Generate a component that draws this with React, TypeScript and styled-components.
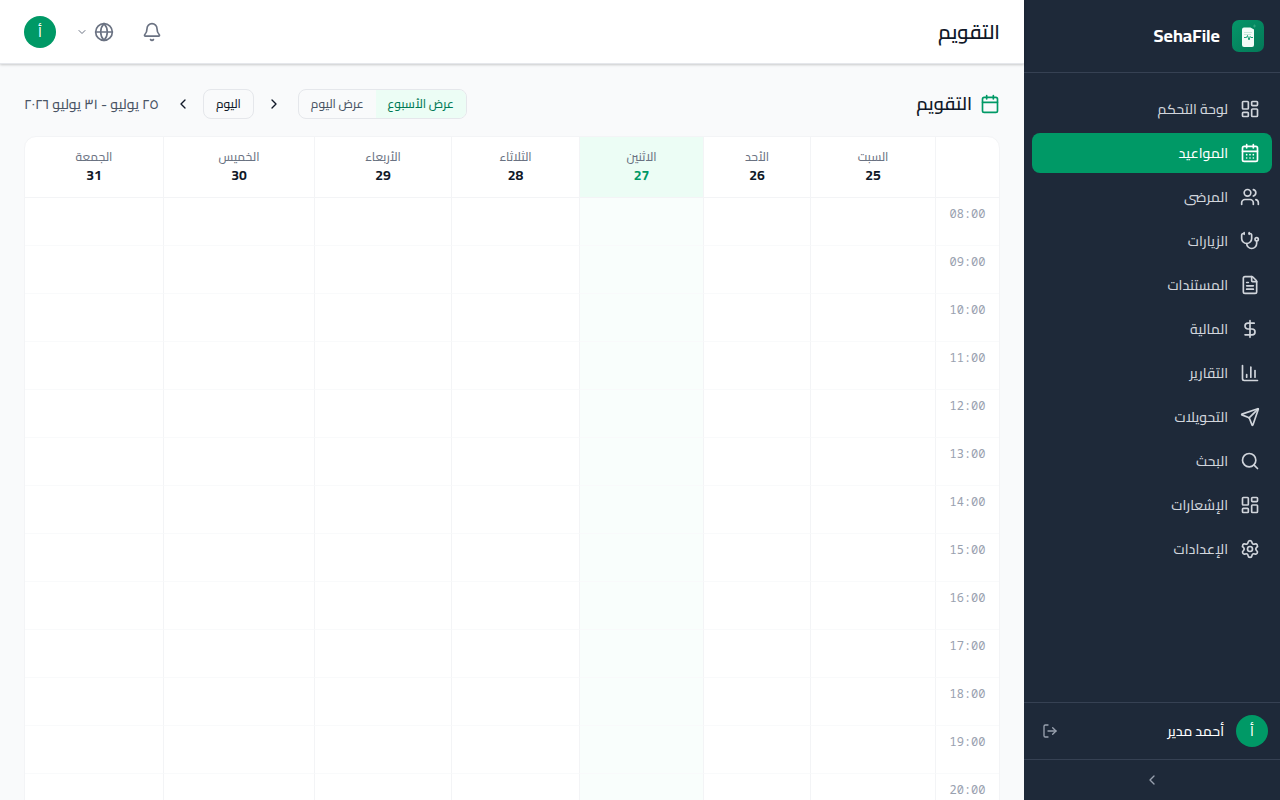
import React from "react";
import styled, { createGlobalStyle, css } from "styled-components";
import {
  Bell,
  Calendar,
  CalendarDays,
  ChartColumn,
  ChevronDown,
  ChevronLeft,
  ChevronRight,
  DollarSign,
  FileText,
  Globe,
  LayoutDashboard,
  LogOut,
  LucideIcon,
  Search,
  Send,
  Settings,
  Stethoscope,
  Users,
} from "lucide-react";

const GlobalStyle = createGlobalStyle`
  *, *::before, *::after { box-sizing: border-box; }
  body {
    margin: 0;
    font-family: Cairo, "Noto Sans", "DejaVu Sans", sans-serif;
    font-size: 14px;
    line-height: 20px;
    color: #101828;
    background: #f9fafb;
  }
  h1, h2, p { margin: 0; }
  button {
    font: inherit;
    color: inherit;
    background: none;
    border: 0;
    padding: 0;
    cursor: pointer;
  }
`;

const Shell = styled.div`
  display: flex;
  height: 100vh;
  overflow: hidden;
`;

const Sidebar = styled.aside`
  display: flex;
  flex-direction: column;
  flex: none;
  width: 256px;
  background: #1e2939;
  color: #ffffff;
`;

const Brand = styled.div`
  display: flex;
  align-items: center;
  gap: 12px;
  padding: 20px 16px;
  border-bottom: 1px solid #364153;
`;

const BrandName = styled.span`
  font-size: 18px;
  line-height: 28px;
  font-weight: 700;
`;

const Nav = styled.nav`
  display: flex;
  flex-direction: column;
  flex: 1;
  gap: 4px;
  padding: 16px 8px;
  overflow: hidden;
`;

const NavLink = styled.a<{ $active?: boolean }>`
  display: flex;
  align-items: center;
  gap: 12px;
  padding: 10px 12px;
  border-radius: 8px;
  font-weight: 500;
  text-decoration: none;
  color: ${(p) => (p.$active ? "#ffffff" : "#d1d5dc")};
  background: ${(p) => (p.$active ? "#009966" : "transparent")};
`;

const Profile = styled.div`
  display: flex;
  align-items: center;
  gap: 12px;
  padding: 12px;
  border-top: 1px solid #364153;
`;

const ProfileName = styled.span`
  flex: 1;
  font-weight: 500;
`;

const Avatar = styled.span`
  display: flex;
  align-items: center;
  justify-content: center;
  flex: none;
  width: 32px;
  height: 32px;
  border-radius: 50%;
  background: #009966;
  color: #ffffff;
  font-weight: 500;
`;

const LogoutButton = styled.button`
  display: flex;
  padding: 6px;
  color: #99a1af;
`;

const CollapseButton = styled.button`
  display: flex;
  align-items: center;
  justify-content: center;
  height: 41px;
  border-top: 1px solid #364153;
  color: #99a1af;
`;

const Content = styled.div`
  display: flex;
  flex-direction: column;
  flex: 1;
  min-width: 0;
`;

const TopBar = styled.header`
  display: flex;
  align-items: center;
  justify-content: space-between;
  flex: none;
  height: 64px;
  padding: 0 24px;
  background: #ffffff;
  border-bottom: 1px solid #e5e7eb;
  box-shadow: 0 1px 3px rgba(0, 0, 0, 0.1), 0 1px 2px rgba(0, 0, 0, 0.1);
  z-index: 1;
`;

const PageTitle = styled.h1`
  font-size: 20px;
  line-height: 28px;
  font-weight: 600;
`;

const TopActions = styled.div`
  display: flex;
  align-items: center;
  gap: 12px;
`;

const TopButton = styled.button`
  display: flex;
  align-items: center;
  gap: 6px;
  padding: 8px;
  color: #6a7282;
`;

const Main = styled.main`
  flex: 1;
  min-height: 0;
  padding: 24px;
  overflow-y: auto;
  scrollbar-width: none;
`;

const Toolbar = styled.div`
  display: flex;
  align-items: center;
  justify-content: space-between;
  height: 32px;
  margin-bottom: 16px;
`;

const SectionTitle = styled.h2`
  display: flex;
  align-items: center;
  gap: 8px;
  font-size: 18px;
  line-height: 28px;
  font-weight: 600;

  svg { color: #009966; }
`;

const Controls = styled.div`
  display: flex;
  align-items: center;
  gap: 12px;
`;

const Segmented = styled.div`
  display: flex;
  overflow: hidden;
  border: 1px solid #e5e7eb;
  border-radius: 8px;
`;

const Segment = styled.button<{ $active?: boolean }>`
  padding: 6px 12px;
  font-size: 12px;
  line-height: 16px;
  font-weight: 500;
  white-space: nowrap;
  color: ${(p) => (p.$active ? "#007a55" : "#4a5565")};
  background: ${(p) => (p.$active ? "#ecfdf5" : "transparent")};
`;

const Pager = styled.div`
  display: flex;
  align-items: center;
  gap: 8px;
`;

const PagerButton = styled.button`
  display: flex;
  padding: 4px;
`;

const TodayButton = styled.button`
  padding: 6px 12px;
  border: 1px solid #e5e7eb;
  border-radius: 8px;
  font-size: 12px;
  line-height: 16px;
  font-weight: 500;
`;

const DateRange = styled.span`
  font-weight: 500;
  color: #4a5565;
  white-space: nowrap;
`;

const Card = styled.section`
  overflow: hidden;
  background: #ffffff;
  border: 1px solid #f3f4f6;
  border-radius: 12px;
`;

const Table = styled.table`
  width: 100%;
  table-layout: fixed;
  border-collapse: separate;
  border-spacing: 0;
`;

const Column = styled.col<{ $width: number }>`
  width: ${(p) => p.$width}px;
`;

const DayHeader = styled.th<{ $today?: boolean }>`
  height: 61px;
  padding: 0;
  text-align: center;
  vertical-align: middle;
  border-bottom: 1px solid #f3f4f6;
  border-left: 1px solid #f3f4f6;
  &:last-child { border-left: 0; }
  ${(p) => p.$today && css`background: #ecfdf5;`}
`;

const DayName = styled.div`
  font-size: 12px;
  line-height: 16px;
  font-weight: 500;
  color: #6a7282;
`;

const DayNumber = styled.div<{ $today?: boolean }>`
  font-weight: 700;
  color: ${(p) => (p.$today ? "#009966" : "#101828")};
`;

const TimeCell = styled.th`
  height: 48px;
  padding: 8px 0;
  font-family: "Noto Sans Mono", "Liberation Mono", monospace;
  font-size: 12px;
  line-height: 16px;
  font-weight: 400;
  text-align: center;
  vertical-align: top;
  color: #99a1af;
  border-bottom: 1px solid #f9fafb;
  border-left: 1px solid #f3f4f6;
`;

const Slot = styled.td<{ $today?: boolean }>`
  height: 48px;
  padding: 0;
  border-bottom: 1px solid #f9fafb;
  border-left: 1px solid #f3f4f6;
  &:last-child { border-left: 0; }
  ${(p) => p.$today && css`background: #f9fefc;`}
`;

const NAV: { label: string; icon: LucideIcon; active?: boolean }[] = [
  { label: "لوحة التحكم", icon: LayoutDashboard },
  { label: "المواعيد", icon: CalendarDays, active: true },
  { label: "المرضى", icon: Users },
  { label: "الزيارات", icon: Stethoscope },
  { label: "المستندات", icon: FileText },
  { label: "المالية", icon: DollarSign },
  { label: "التقارير", icon: ChartColumn },
  { label: "التحويلات", icon: Send },
  { label: "البحث", icon: Search },
  { label: "الإشعارات", icon: LayoutDashboard },
  { label: "الإعدادات", icon: Settings },
];

const DAYS = [
  { name: "السبت", date: 25, width: 125 },
  { name: "الأحد", date: 26, width: 107 },
  { name: "الاثنين", date: 27, width: 124, today: true },
  { name: "الثلاثاء", date: 28, width: 128 },
  { name: "الأربعاء", date: 29, width: 137 },
  { name: "الخميس", date: 30, width: 151 },
  { name: "الجمعة", date: 31, width: 138 },
];

const HOURS = Array.from({ length: 13 }, (_, i) => `${String(i + 8).padStart(2, "0")}:00`);

function Logo() {
  return (
    <svg width="32" height="32" viewBox="0 0 32 32" aria-hidden="true">
      <defs>
        <linearGradient id="brand" x1="0" y1="0" x2="1" y2="1">
          <stop offset="0" stopColor="#059669" />
          <stop offset="1" stopColor="#047857" />
        </linearGradient>
      </defs>
      <rect width="32" height="32" rx="7" fill="url(#brand)" />
      <path d="M12 7.5h6.500l3.500 2V25a2 2 0 0 1-2 2h-8a2 2 0 0 1-2-2V9.500a2 2 0 0 1 2-2z" fill="#f3fbf8" />
      <path d="M12 12.500h8M12 14.500h7" stroke="#a7d9c6" strokeWidth="0.600" />
      <path d="M12 17.500h2.500l1-2 1.500 4.500 1.200-3.500.8 1h2" fill="none" stroke="#059669" strokeWidth="0.900" />
      <path d="M22.500 4.500v3M21 6h3" stroke="#4db591" strokeWidth="1" opacity="0.600" />
    </svg>
  );
}

export default function App() {
  return (
    <>
      <GlobalStyle />
      <Shell dir="rtl" lang="ar">
        <Sidebar>
          <Brand>
            <Logo />
            <BrandName>SehaFile</BrandName>
          </Brand>
          <Nav>
            {NAV.map(({ label, icon: Icon, active }) => (
              <NavLink key={label} href="#" $active={active} aria-current={active ? "page" : undefined}>
                <Icon size={20} />
                {label}
              </NavLink>
            ))}
          </Nav>
          <Profile>
            <Avatar>أ</Avatar>
            <ProfileName>أحمد مدير</ProfileName>
            <LogoutButton aria-label="تسجيل الخروج">
              <LogOut size={16} />
            </LogoutButton>
          </Profile>
          <CollapseButton aria-label="طي القائمة">
            <ChevronLeft size={16} />
          </CollapseButton>
        </Sidebar>

        <Content>
          <TopBar>
            <PageTitle>التقويم</PageTitle>
            <TopActions>
              <TopButton aria-label="الإشعارات">
                <Bell size={20} />
              </TopButton>
              <TopButton aria-label="اللغة">
                <Globe size={20} />
                <ChevronDown size={12} />
              </TopButton>
              <Avatar>أ</Avatar>
            </TopActions>
          </TopBar>

          <Main>
            <Toolbar>
              <SectionTitle>
                <Calendar size={20} />
                التقويم
              </SectionTitle>
              <Controls>
                <Segmented>
                  <Segment $active>عرض الأسبوع</Segment>
                  <Segment>عرض اليوم</Segment>
                </Segmented>
                <Pager>
                  <PagerButton aria-label="السابق">
                    <ChevronRight size={16} />
                  </PagerButton>
                  <TodayButton>اليوم</TodayButton>
                  <PagerButton aria-label="التالي">
                    <ChevronLeft size={16} />
                  </PagerButton>
                </Pager>
                <DateRange>٢٥ يوليو - ٣١ يوليو ٢٠٢٦</DateRange>
              </Controls>
            </Toolbar>

            <Card>
              <Table>
                <colgroup>
                  <Column $width={64} />
                  {DAYS.map((d) => (
                    <Column key={d.date} $width={d.width} />
                  ))}
                </colgroup>
                <thead>
                  <tr>
                    <DayHeader as="td" />
                    {DAYS.map((d) => (
                      <DayHeader key={d.date} scope="col" $today={d.today}>
                        <DayName>{d.name}</DayName>
                        <DayNumber $today={d.today}>{d.date}</DayNumber>
                      </DayHeader>
                    ))}
                  </tr>
                </thead>
                <tbody>
                  {HOURS.map((hour) => (
                    <tr key={hour}>
                      <TimeCell scope="row">{hour}</TimeCell>
                      {DAYS.map((d) => (
                        <Slot key={d.date} $today={d.today} />
                      ))}
                    </tr>
                  ))}
                </tbody>
              </Table>
            </Card>
          </Main>
        </Content>
      </Shell>
    </>
  );
}
